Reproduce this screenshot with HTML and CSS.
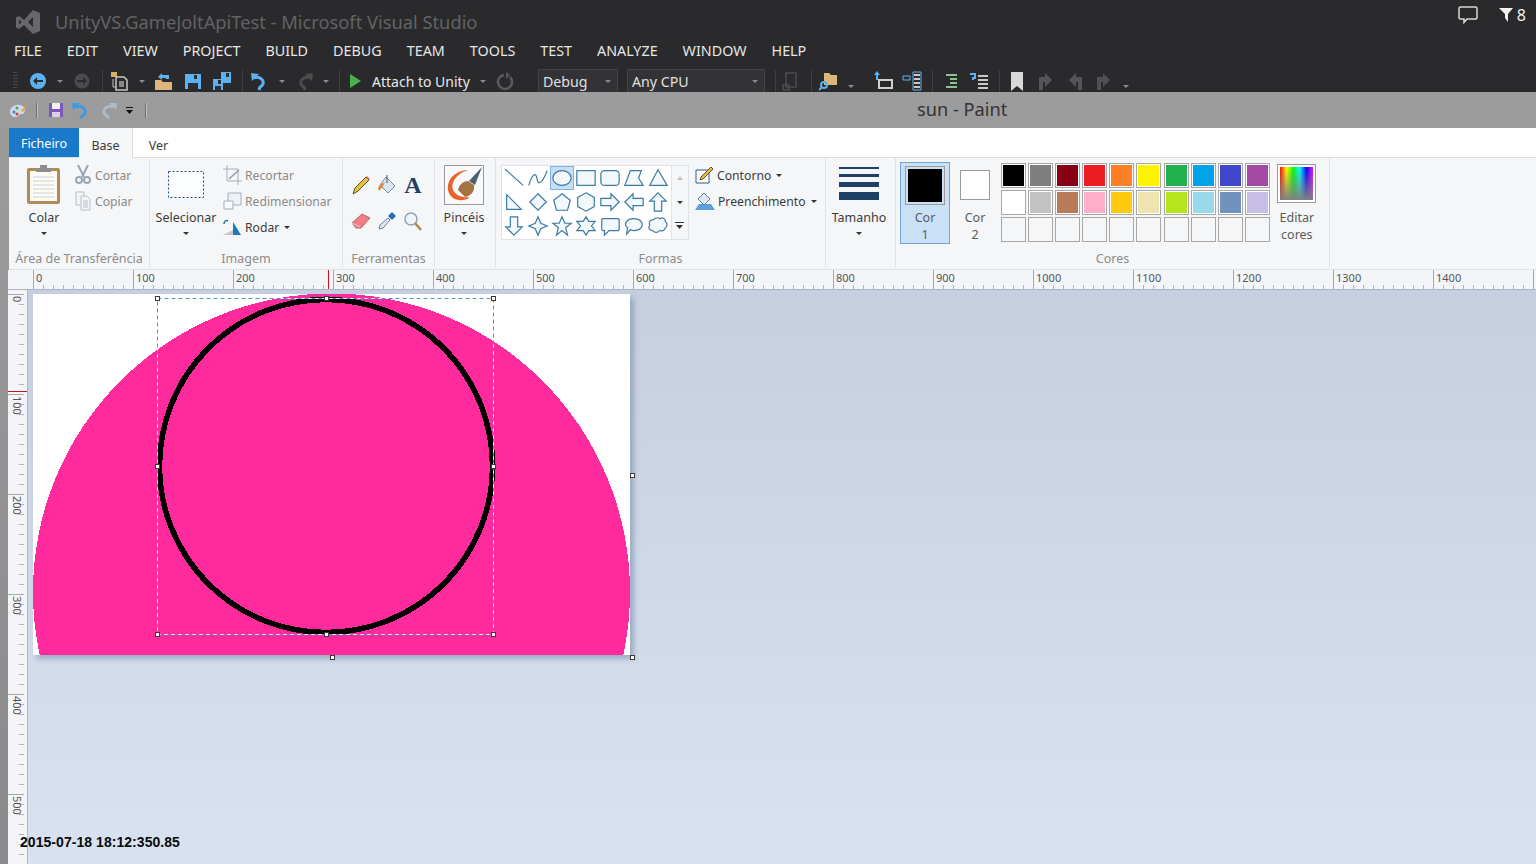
FILE: index.html
```html
<!DOCTYPE html>
<html>

<head>
    <title>sun - Paint</title>
    <link rel="stylesheet" href="styles.css">
</head>

<body>
    <!-- visual studio chrome -->
    <header class="vs">
        <div class="vs-title">
            <svg class="vs-logo" width="26" height="26" viewBox="0 0 26 26"><path fill-rule="evenodd" fill="#68686a" d="M18 1l7 3v18l-7 3-9-9-5 4-3-1.500V8.500L4 7l5 4zM18 8l-5 5 5 5zM4 10.500v5l2.500-2.500z"/></svg>
            <span class="vs-name">UnityVS.GameJoltApiTest - Microsoft Visual Studio</span>
            <div class="vs-notify">
                <svg width="22" height="20" viewBox="0 0 22 20"><path fill="none" stroke="#d8d8d8" stroke-width="1.500" d="M3 2h16l1 1v10l-1 1H10l-3 3.500V14H3l-1-1V3z"/></svg>
                <svg class="vs-filter" width="15" height="16" viewBox="0 0 15 16"><path fill="#f0f0f0" d="M0 1h14L9 7v8L6 11V7z"/></svg>
                <span>8</span>
            </div>
        </div>
        <nav class="vs-menu">
            <span>FILE</span><span>EDIT</span><span>VIEW</span><span>PROJECT</span><span>BUILD</span><span>DEBUG</span><span>TEAM</span><span>TOOLS</span><span>TEST</span><span>ANALYZE</span><span>WINDOW</span><span>HELP</span>
        </nav>
        <div class="vs-toolbar">
            <i class="tb-grip"></i>
            <div class="tb-group">
                <svg width="20" height="20" viewBox="0 0 20 20"><circle cx="10" cy="10" r="8" fill="#5cb2f0"/><path d="M5 10l4-4v3h6v2H9v3z" fill="#2d2d30"/></svg>
                <i class="dd"></i>
                <svg width="20" height="20" viewBox="0 0 20 20"><circle cx="10" cy="10" r="7.500" fill="#4c4c4e"/><path d="M15 10l-4-4v3H5v2h6v3z" fill="#2d2d30"/></svg>
            </div>
            <i class="tb-sep"></i>
            <div class="tb-group">
                <svg width="20" height="20" viewBox="0 0 20 20"><path d="M6 6h8l3 3v10H6z" fill="none" stroke="#c8c8c8" stroke-width="1.500"/><path d="M9 10h5v6H9z" fill="#888"/><path d="M1 1h6v5H1z" fill="#d8b060"/><path d="M3 8v8h3" fill="none" stroke="#c8c8c8"/></svg>
                <i class="dd"></i>
                <svg width="20" height="20" viewBox="0 0 20 20"><path d="M1 9h6l2 2h9v8H1z" fill="#dcb67a"/><path d="M4 6l4-4v2h7v4h-3V7H8v2z" fill="#5cb2f0"/></svg>
                <svg width="20" height="20" viewBox="0 0 20 20"><path d="M2 3h16v15H2z" fill="#5cb2f0"/><path d="M11 4h3v4h-3zM5 12h10v6H5z" fill="#2d2d30"/></svg>
                <svg width="20" height="20" viewBox="0 0 20 20"><path d="M9 1h10v11H9zM1 8h10v11H1z" fill="#5cb2f0"/><path d="M14 2h3v4h-3zM6 9h3v4H6zM3 15h6v4H3z" fill="#2d2d30"/></svg>
            </div>
            <i class="tb-sep"></i>
            <div class="tb-group">
                <svg width="20" height="20" viewBox="0 0 20 20"><path d="M4 7a6 5 0 1 1 6 9l-1 3" fill="none" stroke="#5cb2f0" stroke-width="3"/><path d="M1 2l8 1-7 7z" fill="#5cb2f0"/></svg>
                <i class="dd"></i>
                <svg width="20" height="20" viewBox="0 0 20 20"><path d="M16 7a6 5 0 1 0-6 9l1 3" fill="none" stroke="#4c4c4e" stroke-width="3"/><path d="M19 2l-8 1 7 7z" fill="#4c4c4e"/></svg>
                <i class="dd"></i>
            </div>
            <i class="tb-sep"></i>
            <div class="tb-group">
                <svg width="16" height="20" viewBox="0 0 16 20"><path d="M3 3l11 7-11 7z" fill="#4caf50"/></svg>
                <span class="tb-label">Attach to Unity</span>
                <i class="dd"></i>
                <svg width="20" height="20" viewBox="0 0 20 20"><path d="M15 6a7 7 0 1 1-6-2" fill="none" stroke="#5a5a5c" stroke-width="2.500"/><path d="M11 1v7l4-4z" fill="#5a5a5c"/></svg>
            </div>
            <div class="tb-combo tb-combo-debug"><span>Debug</span><i class="dd"></i></div>
            <div class="tb-combo tb-combo-cpu"><span>Any CPU</span><i class="dd"></i></div>
            <i class="tb-sep"></i>
            <svg class="tb-icon" width="20" height="20" viewBox="0 0 20 20"><path d="M5 2h10v14H5zM2 14h6v5H2z" fill="none" stroke="#4c4c4e" stroke-width="1.500"/></svg>
            <i class="tb-sep"></i>
            <div class="tb-group tb-wide">
                <svg width="20" height="20" viewBox="0 0 20 20"><path d="M5 2h5l2 2h6v10H5z" fill="#dcb67a"/><circle cx="5" cy="14" r="3" fill="none" stroke="#5cb2f0" stroke-width="2"/><path d="M3 16l-3 3" stroke="#5cb2f0" stroke-width="2"/></svg>
                <i class="dd dd-line"></i>
                <svg width="20" height="20" viewBox="0 0 20 20"><path d="M6 9h13v8H6z" fill="none" stroke="#d0d0d0" stroke-width="2"/><path d="M4 0l3 4H5v5H3V4H1z" fill="#5cb2f0"/></svg>
                <svg width="20" height="20" viewBox="0 0 20 20"><path d="M11 1h8v18h-8zM1 5h7v4H1z" fill="none" stroke="#5cb2f0" stroke-width="1"/><path d="M12 3h6v2h-6zM12 7h6v2h-6zM12 11h6v2h-6zM12 15h6v2h-6z" fill="#c8c8c8"/></svg>
            </div>
            <i class="tb-sep"></i>
            <div class="tb-group">
                <svg width="20" height="20" viewBox="0 0 20 20"><path d="M6 3h11v2H6zM10 7h7v2h-7zM10 11h7v2h-7zM6 15h11v2H6z" fill="#8fc08f"/></svg>
                <svg width="20" height="20" viewBox="0 0 20 20"><path d="M9 4h10v2H9zM9 8h10v2H9zM9 12h10v2H9zM9 16h10v2H9z" fill="#c8c8c8"/><path d="M1 3h5v4H4v2" fill="none" stroke="#5cb2f0" stroke-width="2"/></svg>
            </div>
            <i class="tb-sep"></i>
            <div class="tb-group">
                <svg width="20" height="20" viewBox="0 0 20 20"><path d="M4 1h12v19l-6-5-6 5z" fill="#d8d8d8"/></svg>
                <svg width="20" height="20" viewBox="0 0 20 20"><path d="M3 6h6V2l7 7-7 7v-5H7v8H3z" fill="#555557"/></svg>
                <svg width="20" height="20" viewBox="0 0 20 20"><path d="M17 6h-6V2L4 9l7 7v-5h2v8h4z" fill="#555557"/></svg>
                <svg width="20" height="20" viewBox="0 0 20 20"><path d="M3 6h6V2l7 7-7 7v-5H7v8H3z" fill="#505052"/></svg>
                <i class="dd dd-line"></i>
            </div>
        </div>
    </header>

    <!-- paint window -->
    <main class="paint">
        <div class="paint-title">
            <svg width="20" height="20" viewBox="0 0 20 20"><path d="M1 12c0-5 5-8 10-7 5 1 6 5 4 8-1 2-4 0-5 2-1 3-9 3-9-3z" fill="#cfd8e6"/><circle cx="5" cy="12" r="1.500" fill="#3a7fd0"/><circle cx="8" cy="8" r="1.500" fill="#4caf50"/><circle cx="8" cy="14" r="1.500" fill="#d04040"/><path d="M19 3l-5 9-2-1z" fill="#e8a030"/></svg>
            <i class="qat-sep"></i>
            <svg width="16" height="16" viewBox="0 0 16 16"><path d="M1 1h14v14H1z" fill="#7a57b8"/><path d="M4 1h8v6H4z" fill="#eee"/><path d="M4 10h8v5H4z" fill="#d8d0e8"/></svg>
            <svg width="20" height="20" viewBox="0 0 20 20"><path d="M5 7a6 5 0 1 1 6 9l-2 2" fill="none" stroke="#3a9be8" stroke-width="3"/><path d="M1 3l8 0-7 7z" fill="#3a9be8"/></svg>
            <svg width="20" height="20" viewBox="0 0 20 20"><path d="M15 7a6 5 0 1 0-6 9l2 2" fill="none" stroke="#a9bccb" stroke-width="3"/><path d="M19 3l-8 0 7 7z" fill="#a9bccb"/></svg>
            <svg width="9" height="9" viewBox="0 0 9 9"><path d="M1 1h7v1H1zM1 4h7L4.500 8z" fill="#111"/></svg>
            <i class="qat-sep"></i>
            <span class="paint-name">sun - Paint</span>
        </div>

        <div class="tabs">
            <span class="tab tab-file">Ficheiro</span>
            <span class="tab tab-active">Base</span>
            <span class="tab">Ver</span>
        </div>

        <div class="ribbon">
            <section class="group group-clip">
                <div class="group-body">
                    <div class="big-btn btn-colar">
                        <svg class="big-icon" width="36" height="42" viewBox="0 0 36 42"><rect x="1" y="3" width="33" height="36" rx="2" fill="#b08a58"/><rect x="4" y="6" width="27" height="30" fill="#fdfbf2"/><path d="M7 12h21M7 16h21M7 20h21M7 24h21M7 28h21M7 32h21" stroke="#c9d3df"/><path d="M10 3h15v4H10zM14 0h7v3h-7z" fill="#8e8e8e"/></svg>
                        <span>Colar</span><i class="caret"></i>
                    </div>
                    <div class="small-col">
                        <div class="small-btn off"><svg width="16" height="20" viewBox="0 0 16 20"><path d="M3 0l6 12M13 0L7 12" stroke="#9aa6b4" stroke-width="2" fill="none"/><circle cx="4" cy="15" r="3" fill="none" stroke="#9aa6b4" stroke-width="2"/><circle cx="12" cy="15" r="3" fill="none" stroke="#9aa6b4" stroke-width="2"/></svg><span>Cortar</span></div>
                        <div class="small-btn off"><svg width="16" height="20" viewBox="0 0 16 20"><path d="M1 1h8v13H1z" fill="#f2f5f8" stroke="#b6c0cb"/><path d="M6 5h6l3 3v11H6z" fill="#f2f5f8" stroke="#b6c0cb"/><path d="M8 10h5M8 12h5M8 14h5M8 16h5" stroke="#b6c0cb"/></svg><span>Copiar</span></div>
                    </div>
                </div>
                <div class="group-label">Área de Transferência</div>
            </section>

            <section class="group group-image">
                <div class="group-body">
                    <div class="big-btn btn-select">
                        <svg class="big-icon" width="36" height="42" viewBox="0 0 36 42"><rect x=".5" y="6.500" width="35" height="26" fill="#fdfeff" stroke="#1f4f80" stroke-dasharray="2 2"/></svg>
                        <span>Selecionar</span><i class="caret"></i>
                    </div>
                    <div class="small-col">
                        <div class="small-btn off"><svg width="19" height="20" viewBox="0 0 19 20"><path d="M4 0v16h15M0 4h15v16" fill="none" stroke="#a3afbc"/><path d="M6 14L16 5" stroke="#8f9aa6" stroke-width="1.500"/></svg><span>Recortar</span></div>
                        <div class="small-btn off"><svg width="19" height="20" viewBox="0 0 19 20"><path d="M5 2h13v12H5z" fill="#edf2f8" stroke="#a3afbc"/><path d="M1 10h9v8H1z" fill="#f8fafc" stroke="#a3afbc"/></svg><span>Redimensionar</span></div>
                        <div class="small-btn"><svg width="19" height="20" viewBox="0 0 19 20"><path d="M0 18l10-5v5z" fill="#c8c8c8"/><path d="M10 18V5l8 13z" fill="#1f78b8"/><path d="M1 7c0-3 2-4 4-3" fill="none" stroke="#2a72b0" stroke-width="1.500"/></svg><span>Rodar</span><i class="caret caret-inline"></i></div>
                    </div>
                </div>
                <div class="group-label">Imagem</div>
            </section>

            <section class="group group-tools">
                <div class="group-body tools-grid">
                    <svg width="20" height="20" viewBox="0 0 20 20"><path d="M2 19l2-6L15 2l3 3L7 16z" fill="#e8c040" stroke="#5a5030"/><path d="M15 2l3 3 1-1-3-3z" fill="#e07070"/></svg>
                    <svg width="22" height="22" viewBox="0 0 22 22"><path d="M10 3l9 9-7 7-8-8z" fill="#d8e6f4" stroke="#6f8ba6"/><path d="M9 8L4 11c-3 3-2 6 0 5l3-4z" fill="#f08030"/><path d="M11 1v8" stroke="#555"/></svg>
                    <span class="tool-text">A</span>
                    <svg width="20" height="18" viewBox="0 0 20 18"><path d="M1 11L11 2l8 4-9 10H5z" fill="#f07f85" stroke="#c06068"/><path d="M1 11l8 4" stroke="#d8d8d8"/></svg>
                    <svg width="20" height="20" viewBox="0 0 20 20"><path d="M2 18l1-4 8-7 2 2-7 8z" fill="#dfeaf4" stroke="#6a8098"/><path d="M11 5l4-4 4 4-4 4z" fill="#1f70b8"/></svg>
                    <svg width="20" height="20" viewBox="0 0 20 20"><circle cx="8" cy="8" r="6" fill="#eef5fb" stroke="#8fa2b4" stroke-width="1.500"/><path d="M12 12l6 7" stroke="#a88b50" stroke-width="2.500"/></svg>
                </div>
                <div class="group-label">Ferramentas</div>
            </section>

            <section class="group group-brush">
                <div class="group-body">
                    <div class="big-btn btn-brush">
                        <svg class="big-icon" width="40" height="40" viewBox="0 0 40 40"><rect x=".5" y=".5" width="39" height="39" fill="#f8f9fa" stroke="#9a9a9a"/><path d="M24 5C7 6 0 20 6 30c4 6 14 7 20 2-7 1-14-1-17-7-3-8 5-17 15-20z" fill="#e8622a"/><path d="M14 25l7 7c6-1 10-6 9-12l-6-4c-5 0-9 4-10 9z" fill="#a4733f"/><path d="M25 16l13-14-7 18z" fill="#4f5f6e"/></svg>
                        <span>Pincéis</span><i class="caret"></i>
                    </div>
                </div>
                <div class="group-label"></div>
            </section>

            <section class="group group-shapes">
                <div class="group-body shapes-body">
                    <div class="gallery">
                        <div class="shape"><svg viewBox="0 0 24 24"><path d="M2 2l20 18"/></svg></div>
                        <div class="shape"><svg viewBox="0 0 24 24"><path d="M2 20C6 6 10 6 11 13s5 6 11-9"/></svg></div>
                        <div class="shape shape-on"><svg viewBox="0 0 24 24"><ellipse cx="12" cy="12" rx="10" ry="8"/></svg></div>
                        <div class="shape"><svg viewBox="0 0 24 24"><rect x="2" y="4" width="20" height="16"/></svg></div>
                        <div class="shape"><svg viewBox="0 0 24 24"><rect x="2" y="4" width="20" height="16" rx="4"/></svg></div>
                        <div class="shape"><svg viewBox="0 0 24 24"><path d="M8 4h12l-3 8 5 8H2z"/></svg></div>
                        <div class="shape"><svg viewBox="0 0 24 24"><path d="M12 3l10 17H3z"/></svg></div>
                        <div class="shape"><svg viewBox="0 0 24 24"><path d="M4 4l16 16H4z"/></svg></div>
                        <div class="shape"><svg viewBox="0 0 24 24"><path d="M12 3l9 9-9 9-9-9z"/></svg></div>
                        <div class="shape"><svg viewBox="0 0 24 24"><path d="M12 3l9 7-3 11H6L3 10z"/></svg></div>
                        <div class="shape"><svg viewBox="0 0 24 24"><path d="M12 2l9 5v10l-9 5-9-5V7z"/></svg></div>
                        <div class="shape"><svg viewBox="0 0 24 24"><path d="M2 8h11V3l9 9-9 9v-5H2z"/></svg></div>
                        <div class="shape"><svg viewBox="0 0 24 24"><path d="M22 8H11V3l-9 9 9 9v-5h11z"/></svg></div>
                        <div class="shape"><svg viewBox="0 0 24 24"><path d="M8 22V11H3l9-9 9 9h-5v11z"/></svg></div>
                        <div class="shape"><svg viewBox="0 0 24 24"><path d="M8 2v11H3l9 9 9-9h-5V2z"/></svg></div>
                        <div class="shape"><svg viewBox="0 0 24 24"><path d="M12 2l3 7 7 3-7 3-3 7-3-7-7-3 7-3z"/></svg></div>
                        <div class="shape"><svg viewBox="0 0 24 24"><path d="M12 2l3 7h7l-6 5 2 8-6-5-6 5 2-8-6-5h7z"/></svg></div>
                        <div class="shape"><svg viewBox="0 0 24 24"><path d="M12 2l3 5h7l-4 5 4 5h-7l-3 5-3-5H2l4-5-4-5h7z"/></svg></div>
                        <div class="shape"><svg viewBox="0 0 24 24"><path d="M4 4h17l1 1v11l-1 1H11l-5 5v-5H4l-1-1V5z"/></svg></div>
                        <div class="shape"><svg viewBox="0 0 24 24"><path d="M12 4c12 0 12 13 0 13-1 0-3 0-4-1l-4 5 1-7C0 10 4 4 12 4z"/></svg></div>
                        <div class="shape"><svg viewBox="0 0 24 24"><path d="M7 5c3-3 6-2 7-1 3-2 6 0 6 3 3 2 2 6 0 7-1 3-4 4-6 3-3 3-6 2-8 0-4 0-5-4-3-6-2-3 1-6 4-6z"/></svg></div>
                    </div>
                    <div class="gallery-scroll">
                        <span class="scroll-up"></span>
                        <span class="scroll-down"></span>
                        <svg class="scroll-more" width="9" height="8" viewBox="0 0 9 8"><path d="M0 0h9v1H0zM1 3h7L4.500 7z" fill="#333"/></svg>
                    </div>
                    <div class="small-col shape-opts">
                        <div class="small-btn"><svg width="19" height="20" viewBox="0 0 19 20"><path d="M1 5h13v13H1z" fill="#fff" stroke="#335f7f"/><path d="M5 15l1-3L16 2l2 2L8 14z" fill="#e8c040" stroke="#5a5030"/></svg><span>Contorno</span><i class="caret caret-inline"></i></div>
                        <div class="small-btn"><svg width="20" height="20" viewBox="0 0 20 20"><path d="M0 19l4-6h12l4 6z" fill="#5ba0dc"/><path d="M9 2l6 6-6 6-6-6z" fill="#dfeaf4" stroke="#5f7f9f"/></svg><span>Preenchimento</span><i class="caret caret-inline"></i></div>
                    </div>
                </div>
                <div class="group-label">Formas</div>
            </section>

            <section class="group group-size">
                <div class="group-body">
                    <div class="big-btn btn-size">
                        <div class="size-lines"><i class="l1"></i><i class="l2"></i><i class="l3"></i><i class="l4"></i></div>
                        <span>Tamanho</span><i class="caret"></i>
                    </div>
                </div>
                <div class="group-label"></div>
            </section>

            <section class="group group-colors">
                <div class="group-body colors-body">
                    <div class="cor cor-on">
                        <div class="cor-swatch cor-big"><i></i></div>
                        <span>Cor</span><span>1</span>
                    </div>
                    <div class="cor">
                        <div class="cor-swatch"><i class="cor-white"></i></div>
                        <span>Cor</span><span>2</span>
                    </div>
                    <div class="palette">
                        <i style="background-color:#000000"></i><i style="background-color:#7f7f7f"></i><i style="background-color:#880015"></i><i style="background-color:#ed1c24"></i><i style="background-color:#ff7f27"></i><i style="background-color:#fff200"></i><i style="background-color:#22b14c"></i><i style="background-color:#00a2e8"></i><i style="background-color:#3f48cc"></i><i style="background-color:#a349a4"></i>
                        <i style="background-color:#ffffff"></i><i style="background-color:#c3c3c3"></i><i style="background-color:#b97a57"></i><i style="background-color:#ffaec9"></i><i style="background-color:#ffc90e"></i><i style="background-color:#efe4b0"></i><i style="background-color:#b5e61d"></i><i style="background-color:#99d9ea"></i><i style="background-color:#7092be"></i><i style="background-color:#c8bfe7"></i>
                        <i></i><i></i><i></i><i></i><i></i><i></i><i></i><i></i><i></i><i></i>
                    </div>
                    <div class="edit-colors">
                        <div class="rainbow"></div>
                        <span>Editar</span><span>cores</span>
                    </div>
                </div>
                <div class="group-label">Cores</div>
            </section>
        </div>

        <div class="ruler-h">
            <i class="ruler-mark"></i>
            <span>0</span><span>100</span><span>200</span><span>300</span><span>400</span><span>500</span><span>600</span><span>700</span><span>800</span><span>900</span><span>1000</span><span>1100</span><span>1200</span><span>1300</span><span>1400</span><span></span>
        </div>

        <div class="work-row">
            <div class="ruler-v">
                <i class="ruler-mark-v"></i>
                <span>0</span><span>100</span><span>200</span><span>300</span><span>400</span><span>500</span>
            </div>
            <div class="workspace">
                <div class="canvas">
                    <svg class="drawing" width="597" height="361" viewBox="0 0 597 361">
                        <svg x="0" y="0" width="597" height="361">
                            <circle cx="298.500" cy="298" r="298.500" fill="#ff2a9c" shape-rendering="crispEdges"/>
                        </svg>
                        <circle cx="293" cy="172" r="166.500" fill="none" stroke="#000" stroke-width="5.500" shape-rendering="crispEdges"/>
                        <rect x="124.500" y="4.500" width="336" height="336" fill="none" stroke="#fff"/>
                        <rect x="124.500" y="4.500" width="336" height="336" fill="none" stroke="#4f96c8" stroke-dasharray="4 3"/>
                        <g class="handles">
                            <rect x="122.500" y="2.500" width="4" height="4"/><rect x="291.500" y="2.500" width="4" height="4"/><rect x="458.500" y="2.500" width="4" height="4"/>
                            <rect x="122.500" y="170.500" width="4" height="4"/><rect x="458.500" y="170.500" width="4" height="4"/>
                            <rect x="122.500" y="338.500" width="4" height="4"/><rect x="291.500" y="338.500" width="4" height="4"/><rect x="458.500" y="338.500" width="4" height="4"/>
                            <rect x="597.500" y="179.500" width="4" height="4"/><rect x="297.500" y="361.500" width="4" height="4"/><rect x="597.500" y="361.500" width="4" height="4"/>
                        </g>
                    </svg>
                </div>
            </div>
        </div>
    </main>

    <div class="timestamp">2015-07-18 18:12:350.85</div>
</body>

</html>
```

FILE: styles.css
```css
* {
    box-sizing: border-box;
}

html,
body {
    margin: 0;
    height: 100%;
    overflow: hidden;
}

body {
    position: relative;
    display: flex;
    flex-direction: column;
    width: 1536px;
    height: 864px;
    font-family: "Noto Sans", "Open Sans", sans-serif;
    background-color: #2d2d30;
}

svg {
    display: block;
    flex: none;
}

i {
    display: block;
    flex: none;
}

/* visual studio */

.vs {
    height: 92px;
    flex: none;
    overflow: hidden;
    background-color: #2a2a2c;
}

.vs-title {
    display: flex;
    align-items: center;
    height: 40px;
    padding: 2px 0 0 15px;
}

.vs-name {
    margin-left: 14px;
    font-size: 18.300px;
    color: #626265;
}

.vs-logo {
    margin-top: 2px;
}

.vs-notify {
    display: flex;
    align-items: center;
    margin: -12px 10px 0 auto;
    font-size: 16px;
    color: #f0f0f0;
}

.vs-filter {
    margin-left: 20px;
}

.vs-notify span {
    margin-left: 3px;
}

.vs-menu {
    display: flex;
    gap: 25px;
    height: 26px;
    padding-left: 14px;
    font-size: 14.330px;
    line-height: 22px;
    color: #e6e6e6;
}

.vs-toolbar {
    display: flex;
    align-items: center;
    height: 26px;
    padding: 4px 0 0 13px;
}

.tb-grip {
    width: 5px;
    height: 18px;
    margin-right: 10px;
    background: repeating-linear-gradient(to bottom, #46464a 0 1px, transparent 1px 3px);
}

.tb-group {
    display: flex;
    align-items: center;
    gap: 9px;
}

.tb-wide {
    gap: 9px;
}

.tb-wide .dd-line {
    margin-right: 10px;
}

.tb-sep {
    width: 1px;
    height: 22px;
    margin: 0 7px 0 10px;
    background-color: #3f3f42;
}

.tb-label {
    width: 99px;
    font-size: 14px;
    color: #e8e8e8;
    white-space: nowrap;
}

.tb-combo {
    display: flex;
    align-items: center;
    justify-content: space-between;
    height: 24px;
    padding: 0 6px 0 4px;
    font-size: 14.200px;
    color: #e0e0e0;
    background-color: #333337;
    border: 1px solid #434346;
}

.tb-combo-debug {
    width: 80px;
    margin-left: 23px;
}

.tb-combo-cpu {
    width: 138px;
    margin-left: 9px;
}

.tb-icon {
    margin-left: -2px;
}

.dd {
    width: 0;
    height: 0;
    border-top: 3px solid #8a8a8c;
    border-left: 3px solid transparent;
    border-right: 3px solid transparent;
}

.dd-line {
    margin-top: 10px;
    box-shadow: 0 -3px 0 -2px #8a8a8c;
}

/* paint window */

.paint {
    flex: 1;
    display: flex;
    flex-direction: column;
    min-height: 0;
    padding-left: 8px;
    background: linear-gradient(to bottom, #9c9c9c, #8a8a8a);
}

.paint-title {
    display: flex;
    align-items: center;
    gap: 7px;
    height: 36px;
    flex: none;
    margin-left: -8px;
    padding-left: 9px;
}

.qat-sep {
    width: 1px;
    height: 15px;
    background-color: #6f6f6f;
    box-shadow: 1px 0 0 #c0c0c0;
}

.qat-sep + svg {
    margin-left: 4px;
}

svg + .qat-sep:not(:nth-child(2)) {
    margin-left: 4px;
}

.paint-name {
    margin-left: 764px;
    padding-bottom: 3px;
    font-size: 18.200px;
    color: #333333;
}

.tabs {
    display: flex;
    height: 30px;
    flex: none;
    margin-left: 1px;
    font-size: 12.500px;
    color: #3c3c3c;
    background-color: #ffffff;
    border-bottom: 1px solid #dcdddf;
}

.tab {
    width: 51px;
    padding-top: 9px;
    text-align: center;
}

.tab-file {
    width: 70px;
    height: 29px;
    padding-top: 7px;
    color: #ffffff;
    background-color: #1979ca;
}

.tab-active {
    width: 54px;
    height: 30px;
    background-color: #f5f6f7;
    border-right: 1px solid #dcdddf;
}

/* ribbon */

.ribbon {
    display: flex;
    height: 112px;
    flex: none;
    margin-left: 1px;
    font-size: 12.500px;
    color: #3c3c3c;
    background-color: #f5f6f7;
    border-bottom: 1px solid #dfe1e4;
}

.group {
    display: flex;
    flex-direction: column;
    flex: none;
    margin-bottom: 2px;
    border-right: 1px solid #e2e4e7;
}

.group-clip { width: 141px; }
.group-image { width: 193px; }
.group-tools { width: 92px; }
.group-brush { width: 61px; }
.group-shapes { width: 330px; }
.group-size { width: 70px; }
.group-colors { width: 434px; }

.group-body {
    display: flex;
    flex: 1;
    min-height: 0;
}

.group-label {
    height: 20px;
    line-height: 23px;
    font-size: 12.500px;
    text-align: center;
    color: #8c8c8c;
    white-space: nowrap;
}

.big-btn {
    display: flex;
    flex-direction: column;
    align-items: center;
    line-height: 17px;
    white-space: nowrap;
}

.big-icon {
    margin-top: 7px;
    margin-bottom: 2px;
}

.caret {
    width: 0;
    height: 0;
    margin-top: 6px;
    border-top: 3px solid #333333;
    border-left: 3px solid transparent;
    border-right: 3px solid transparent;
}

.caret-inline {
    margin-top: 0;
    margin-left: 2px;
}

.btn-colar {
    width: 60px;
    margin-left: 5px;
}

.btn-select {
    width: 62px;
    margin-left: 5px;
}

.btn-brush {
    width: 58px;
}

.btn-brush .big-icon {
    margin-top: 7px;
    margin-bottom: 4px;
}

.btn-size {
    width: 66px;
}

.small-col {
    display: flex;
    flex-direction: column;
    gap: 6px;
    padding-top: 7px;
    font-size: 12.200px;
}

.group-clip .small-col {
    margin-left: 1px;
}

.group-image .small-col {
    margin-left: 6px;
}

.small-btn {
    display: flex;
    align-items: center;
    gap: 3px;
    height: 20px;
    white-space: nowrap;
}

.group-clip .small-btn {
    gap: 4px;
}

.small-btn.off {
    color: #8a8a8a;
}

.tools-grid {
    display: grid;
    grid-template-columns: repeat(3, 26px);
    grid-template-rows: repeat(2, 36px);
    align-items: center;
    justify-items: center;
    padding: 9px 0 0 5px;
}

.tool-text {
    font-family: "Liberation Serif", serif;
    font-size: 24px;
    font-weight: bold;
    line-height: 24px;
    color: #1e3f66;
}

/* shapes */

.shapes-body {
    padding: 7px 0 0 5px;
}

.gallery {
    display: grid;
    grid-template-columns: repeat(7, 24px);
    grid-template-rows: repeat(3, 24px);
    width: 171px;
    height: 75px;
    background-color: #ffffff;
    border: 1px solid #dfe3e8;
}

.shape {
    display: flex;
    align-items: center;
    justify-content: center;
}

.shape svg {
    width: 22px;
    height: 22px;
    fill: #f3f8fc;
    stroke: #3a7aa3;
    stroke-width: 1.300;
}

.shape:first-child svg,
.shape:nth-child(2) svg {
    fill: none;
}

.shape-on {
    background-color: #c8e0f7;
    border: 1px solid #7fb2e2;
}

.gallery-scroll {
    position: relative;
    width: 17px;
    height: 75px;
    background-color: #f5f6f7;
    border: 1px solid #dfe3e8;
    border-left: 0;
}

.scroll-up,
.scroll-down {
    position: absolute;
    left: 5px;
    width: 0;
    height: 0;
    border-left: 3px solid transparent;
    border-right: 3px solid transparent;
}

.scroll-up {
    top: 10px;
    border-bottom: 4px solid #c0c0c0;
}

.scroll-down {
    top: 35px;
    border-top: 3px solid #333333;
}

.scroll-more {
    position: absolute;
    left: 3px;
    top: 56px;
}

.shape-opts {
    margin-left: 6px;
    padding-top: 0;
}

.size-lines {
    display: flex;
    flex-direction: column;
    gap: 5px;
    width: 40px;
    height: 42px;
    margin-top: 9px;
}

.size-lines i {
    background-color: #1e3f66;
}

.size-lines .l1 { height: 2px; }
.size-lines .l2 { height: 3px; }
.size-lines .l3 { height: 5px; }
.size-lines .l4 { height: 8px; }

/* colours */

.colors-body {
    padding: 4px 0 0 4px;
}

.cor {
    display: flex;
    flex-direction: column;
    align-items: center;
    width: 50px;
    height: 82px;
    padding-top: 8px;
    line-height: 17px;
    color: #5a5a5a;
}

.cor-on {
    padding-top: 3px;
    background-color: #c9e0f7;
    border: 1px solid #6fa5d8;
}

.cor-swatch {
    width: 30px;
    height: 30px;
    margin-bottom: 9px;
    background-color: #ffffff;
    border: 1px solid #9a9a9a;
}

.cor-big {
    width: 40px;
    height: 41px;
    margin-bottom: 4px;
    padding: 2px;
    background-color: #c9e0f7;
}

.cor-swatch i {
    width: 100%;
    height: 100%;
    background-color: #000000;
}

.cor-swatch .cor-white {
    background-color: #ffffff;
}

.palette {
    display: grid;
    grid-template-columns: repeat(10, 25px);
    grid-template-rows: repeat(3, 25px);
    gap: 2px 2.100px;
    margin: 1px 0 0 1px;
}

.palette i {
    background-clip: padding-box;
    border: 2px solid #ffffff;
    outline: 1px solid #a8a8a8;
    outline-offset: -1px;
}

.palette i:nth-child(n+21) {
    border-color: #f5f6f7;
}

.edit-colors {
    display: flex;
    flex-direction: column;
    align-items: center;
    width: 50px;
    margin-left: 2px;
    line-height: 17px;
    color: #5a5a5a;
}

.rainbow {
    width: 37px;
    height: 37px;
    margin: 3px 0 7px;
    background: linear-gradient(to bottom, transparent, #808080), linear-gradient(to right, #ff0000, #ffff00, #00ff00, #00ffff, #0000ff, #ff00ff);
    border: 2px solid #ffffff;
    outline: 1px solid #9a9a9a;
}

/* rulers */

.ruler-h {
    position: relative;
    display: flex;
    height: 20px;
    flex: none;
    padding-left: 25px;
    font-size: 11px;
    color: #555555;
    background-color: #f3f5f8;
    border-bottom: 1px solid #aab6c8;
}

.ruler-h span {
    width: 100px;
    flex: none;
    padding-left: 2px;
    line-height: 15px;
    border-left: 1px solid #a8a8a8;
    background: repeating-linear-gradient(to right, transparent 0 9px, #b4b4b4 9px 10px) bottom left / 100% 4px no-repeat;
}

.ruler-h span:last-child {
    width: 3px;
    padding-left: 0;
}

.ruler-mark {
    position: absolute;
    left: 320px;
    top: 0;
    width: 1px;
    height: 19px;
    background-color: #cc1122;
}

.work-row {
    display: flex;
    flex: 1;
    min-height: 0;
}

.ruler-v {
    position: relative;
    width: 20px;
    flex: none;
    padding-top: 4px;
    font-size: 11px;
    color: #555555;
    background-color: #f3f5f8;
    border-right: 1px solid #aab6c8;
}

.ruler-v span {
    display: block;
    height: 100px;
    padding: 1px 0 0 2px;
    line-height: 14px;
    writing-mode: vertical-rl;
    border-top: 1px solid #a8a8a8;
    background: repeating-linear-gradient(to bottom, transparent 0 9px, #b4b4b4 9px 10px) top right / 5px 100% no-repeat;
}

.ruler-mark-v {
    position: absolute;
    left: 0;
    top: 101px;
    width: 19px;
    height: 1px;
    background-color: #cc1122;
}

.workspace {
    flex: 1;
    padding: 4px 0 0 5px;
    background: linear-gradient(to bottom, #c5cfe0, #d8e2f0);
}

.canvas {
    width: 597px;
    height: 361px;
    background-color: #ffffff;
    box-shadow: 4px 4px 5px rgba(110, 130, 160, 0.5);
}

.drawing {
    overflow: visible;
}

.handles rect {
    fill: #ffffff;
    stroke: #3a3a3a;
}

.timestamp {
    position: absolute;
    left: 20px;
    top: 834px;
    font-family: "Liberation Sans", sans-serif;
    font-size: 14px;
    font-weight: bold;
    letter-spacing: 0.050px;
    color: #0a0a0a;
}
```
